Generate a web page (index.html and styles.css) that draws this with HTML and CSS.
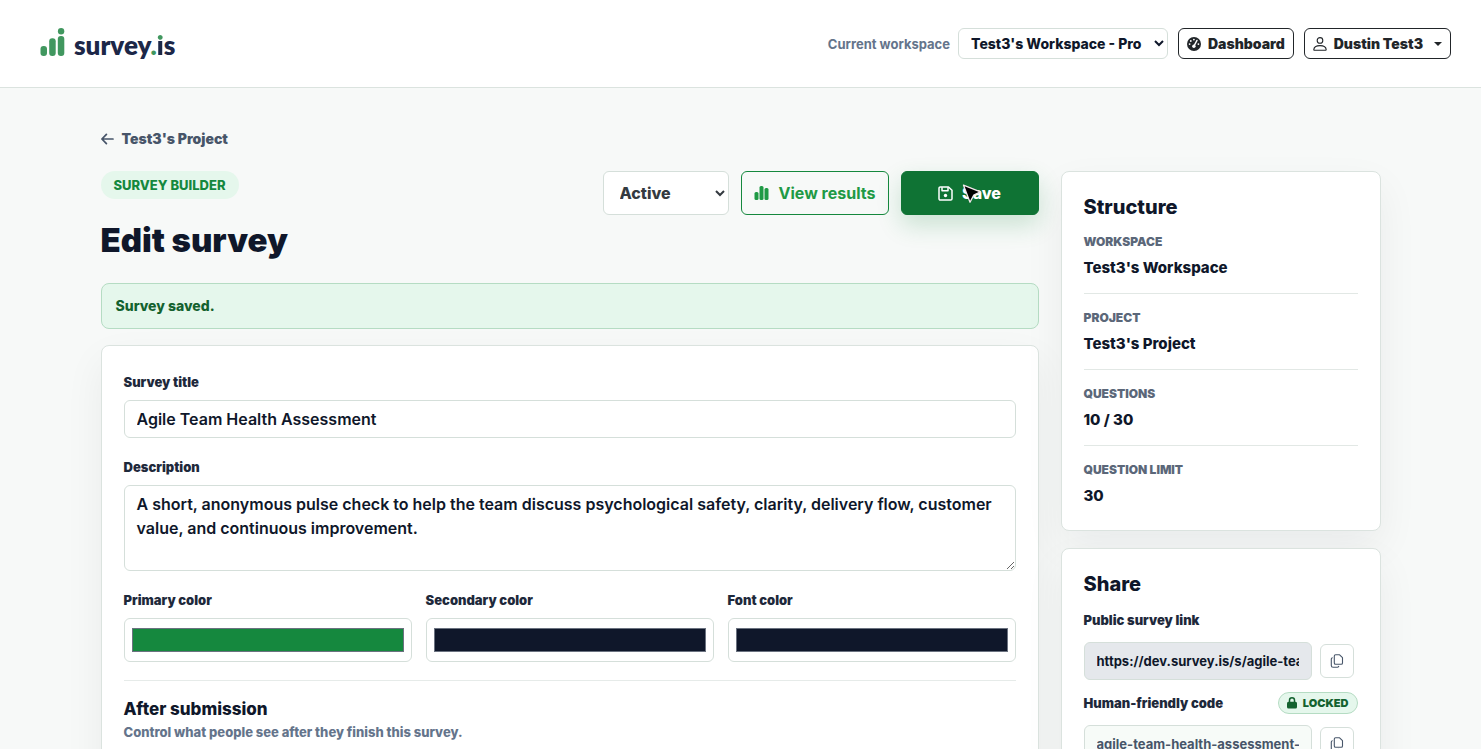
FILE: index.html
```html
<!DOCTYPE html>
<html lang="en">
<head>
  <meta charset="utf-8">
  <meta name="viewport" content="width=device-width, initial-scale=1">
  <title>Edit survey - survey.is</title>
  <link rel="stylesheet" href="styles.css">
</head>
<body>
  <header class="topbar">
    <a class="brand" href="#" aria-label="survey.is">
      <svg class="brand-mark" width="26" height="32" viewBox="0 0 26 32" fill="#41975f">
        <rect x="0.5" y="18" width="6.5" height="10" rx="3"/>
        <rect x="9.2" y="10.2" width="6.5" height="17.8" rx="3"/>
        <rect x="17.8" y="8" width="6.5" height="20" rx="3"/>
        <circle cx="21.1" cy="3.2" r="3.2"/>
      </svg>
      <span class="brand-name">survey<span class="brand-dot">.</span><span class="brand-i">i</span>s</span>
    </a>

    <div class="topbar-nav">
      <label class="workspace-label" for="workspace">Current workspace</label>
      <select class="workspace-select" id="workspace">
        <option>Test3's Workspace - Pro</option>
      </select>
      <a class="btn-dark" href="#">
        <svg width="14" height="14" viewBox="0 0 14 14">
          <circle cx="7" cy="7" r="7" fill="#212529"/>
          <path d="M7.2 8.6 10 3.4" stroke="#fff" stroke-width="1.4" stroke-linecap="round"/>
          <circle cx="6.9" cy="9.2" r="1.7" fill="#fff"/>
          <circle cx="6.9" cy="2.6" r="0.9" fill="#fff"/>
          <circle cx="3.8" cy="4" r="0.9" fill="#fff"/>
          <circle cx="2.6" cy="7.1" r="0.9" fill="#fff"/>
          <circle cx="11.4" cy="7.1" r="0.9" fill="#fff"/>
        </svg>
        Dashboard
      </a>
      <button class="btn-dark btn-user" type="button">
        <svg width="14" height="14" viewBox="0 0 14 14" fill="none" stroke="#212529" stroke-width="1.1">
          <circle cx="7" cy="3.4" r="2.8"/>
          <path d="M1.4 13.3c-.4 0-.6-.3-.6-.7C1 10 3.4 8.6 7 8.6s6 1.4 6.2 4c0 .4-.2.7-.6.7z"/>
        </svg>
        Dustin Test3
        <span class="caret"></span>
      </button>
    </div>
  </header>

  <main class="page">
    <div class="container">
      <a class="back-link" href="#">
        <svg width="13" height="12" viewBox="0 0 13 12" fill="none" stroke="currentColor" stroke-width="1.7" stroke-linecap="round" stroke-linejoin="round">
          <path d="M12 6H1M5.4 1.4.9 6l4.5 4.6"/>
        </svg>
        Test3's Project
      </a>

      <div class="layout">
        <form class="builder">
          <div class="builder-head">
            <div>
              <span class="eyebrow">SURVEY BUILDER</span>
              <h1>Edit survey</h1>
            </div>
            <div class="actions">
              <select class="status-select" aria-label="Status">
                <option>Active</option>
                <option>Draft</option>
              </select>
              <a class="btn btn-outline" href="#">
                <svg width="16" height="16" viewBox="0 0 16 16" fill="currentColor">
                  <rect x="0.5" y="7" width="4" height="8" rx="1.5"/>
                  <rect x="5.5" y="1" width="4" height="14" rx="1.5"/>
                  <rect x="10.5" y="3" width="4" height="12" rx="1.5"/>
                </svg>
                View results
              </a>
              <button class="btn btn-save" type="button">
                <svg width="15" height="15" viewBox="0 0 15 15" fill="none" stroke="currentColor" stroke-width="1.5" stroke-linejoin="round">
                  <path d="M2.3 1h8.2L14 4.3v8.4c0 .7-.6 1.3-1.3 1.3H2.3C1.6 14 1 13.4 1 12.7V2.3C1 1.6 1.6 1 2.3 1z"/>
                  <path d="M4 1.2v3.6h6V1.2"/>
                  <circle cx="7.5" cy="9.5" r="1.7" fill="currentColor" stroke="none"/>
                </svg>
                Save
                <svg class="pointer" width="20" height="22" viewBox="0 0 20 22">
                  <path d="M1.500 2.200 18.400 8.800 11.800 12.100 8 19.200z" fill="#000" stroke="#f3e9ec" stroke-width="1.3" stroke-linejoin="round"/>
                </svg>
              </button>
            </div>
          </div>

          <div class="alert" role="status">Survey saved.</div>

          <section class="card card-form">
            <div class="field">
              <label for="title">Survey title</label>
              <input class="control" id="title" type="text" value="Agile Team Health Assessment">
            </div>
            <div class="field">
              <label for="description">Description</label>
              <textarea class="control control-area" id="description" spellcheck="false">A short, anonymous pulse check to help the team discuss psychological safety, clarity, delivery flow, customer value, and continuous improvement.</textarea>
            </div>
            <div class="colors">
              <div class="field">
                <label for="primary">Primary color</label>
                <input class="color" id="primary" type="color" value="#15883e">
              </div>
              <div class="field">
                <label for="secondary">Secondary color</label>
                <input class="color" id="secondary" type="color" value="#0f172a">
              </div>
              <div class="field">
                <label for="font">Font color</label>
                <input class="color" id="font" type="color" value="#0f172a">
              </div>
            </div>
            <div class="after">
              <h2>After submission</h2>
              <p>Control what people see after they finish this survey.</p>
            </div>
          </section>
        </form>

        <aside class="sidebar">
          <section class="card">
            <h2 class="card-title">Structure</h2>
            <dl class="facts">
              <div class="fact">
                <dt>WORKSPACE</dt>
                <dd>Test3's Workspace</dd>
              </div>
              <div class="fact">
                <dt>PROJECT</dt>
                <dd>Test3's Project</dd>
              </div>
              <div class="fact">
                <dt>QUESTIONS</dt>
                <dd>10 / 30</dd>
              </div>
              <div class="fact">
                <dt>QUESTION LIMIT</dt>
                <dd>30</dd>
              </div>
            </dl>
          </section>

          <section class="card">
            <h2 class="card-title">Share</h2>
            <div class="share-label">
              <label for="link">Public survey link</label>
            </div>
            <div class="share-row">
              <input class="control control-share control-muted" id="link" type="text" readonly value="https://dev.survey.is/s/agile-team-health-assessment">
              <button class="copy" type="button" aria-label="Copy link">
                <svg width="14" height="14" viewBox="0 0 14 14" fill="none" stroke="currentColor" stroke-width="1.1" stroke-linejoin="round" stroke-linecap="round">
                  <path d="M5.6.8h4l2.900 2.900v5.200c0 .8-.5 1.300-1.300 1.300H5.600c-.8 0-1.300-.5-1.300-1.300V2.100c0-.8.5-1.300 1.300-1.300z"/>
                  <path d="M2.300 3.800c-.6.2-1 .7-1 1.300v6.300c0 1 .8 1.800 1.800 1.800h4.300c.6 0 1-.3 1.300-.8"/>
                </svg>
              </button>
            </div>
            <div class="share-label share-label-code">
              <label for="code">Human-friendly code</label>
              <span class="locked">
                <svg width="10" height="12" viewBox="0 0 10 12">
                  <path d="M2.5 5.5V3.3a2.5 2.5 0 0 1 5 0v2.2" fill="none" stroke="currentColor" stroke-width="1.5"/>
                  <rect x="0" y="4.8" width="10" height="6.7" rx="1.5" fill="currentColor"/>
                </svg>
                LOCKED
              </span>
            </div>
            <div class="share-row">
              <input class="control control-share control-locked" id="code" type="text" readonly value="agile-team-health-assessment-2">
              <button class="copy" type="button" aria-label="Copy code">
                <svg width="14" height="14" viewBox="0 0 14 14" fill="none" stroke="currentColor" stroke-width="1.1" stroke-linejoin="round" stroke-linecap="round">
                  <path d="M5.6.8h4l2.900 2.900v5.200c0 .8-.5 1.300-1.300 1.300H5.600c-.8 0-1.300-.5-1.300-1.300V2.100c0-.8.5-1.300 1.300-1.300z"/>
                  <path d="M2.300 3.800c-.6.2-1 .7-1 1.300v6.300c0 1 .8 1.800 1.800 1.800h4.300c.6 0 1-.3 1.300-.8"/>
                </svg>
              </button>
            </div>
          </section>
        </aside>
      </div>
    </div>
  </main>
</body>
</html>
```
FILE: styles.css
```css
* {
  box-sizing: border-box;
}

body {
  margin: 0;
  height: 100vh;
  display: flex;
  flex-direction: column;
  font-family: Inter, sans-serif;
  color: #0f172a;
  background: #f7f9f8;
}

h1, h2, p, dl, dd {
  margin: 0;
}

a {
  text-decoration: none;
}

input, select, textarea, button {
  font-family: inherit;
  margin: 0;
}

svg {
  flex: none;
}

/* Top bar */
.topbar {
  flex: none;
  display: flex;
  align-items: center;
  justify-content: space-between;
  height: 88px;
  padding: 0 30px 0 40px;
  background: #fff;
  border-bottom: 1px solid #dbe3df;
}

.brand {
  display: flex;
  align-items: center;
  gap: 8px;
  color: #1c2748;
}

.brand-name {
  padding-top: 2px;
  font-family: Lato, sans-serif;
  font-size: 26px;
  font-weight: 800;
  line-height: 30px;
}

.brand-dot {
  color: #41975f;
}

/* green dot over a navy stem */
.brand-i {
  color: transparent;
  background: linear-gradient(#41975f 38%, #1c2748 38%);
  -webkit-background-clip: text;
  background-clip: text;
}

.topbar-nav {
  display: flex;
  align-items: center;
  gap: 10px;
}

.workspace-label {
  margin-right: -2px;
  font-size: 13px;
  font-weight: 700;
  line-height: 20px;
  color: #64748b;
}

.workspace-select {
  width: 210px;
  height: 31px;
  padding: 0 0 0 8px;
  border: 1px solid #d5dfda;
  border-radius: 6px;
  background: #fff;
  color: #0f172a;
  font-size: 14px;
  font-weight: 800;
}

.btn-dark {
  display: flex;
  align-items: center;
  gap: 7px;
  height: 31px;
  padding: 0 8px;
  border: 1px solid #212529;
  border-radius: 6px;
  background: #fff;
  color: #212529;
  font-size: 14px;
  font-weight: 900;
}

.caret {
  margin-left: 4px;
  border-top: 4px solid #212529;
  border-left: 4px solid transparent;
  border-right: 4px solid transparent;
}

/* Page */
.page {
  flex: 1;
  min-height: 0;
  overflow-y: auto;
  scrollbar-width: none;
  padding: 40px 24px;
}

.container {
  max-width: 1280px;
  margin: 0 auto;
}

.back-link {
  display: flex;
  align-items: center;
  gap: 8px;
  width: fit-content;
  margin-bottom: 21px;
  color: #475569;
  font-size: 14px;
  font-weight: 900;
  line-height: 22px;
}

.layout {
  display: grid;
  grid-template-columns: minmax(0, 1fr) 320px;
  gap: 22px;
  align-items: start;
}

.builder-head {
  display: flex;
  justify-content: space-between;
  align-items: flex-start;
  margin-bottom: 23px;
}

.eyebrow {
  display: block;
  width: fit-content;
  padding: 0 13px;
  border-radius: 14px;
  background: #e5f7ec;
  color: #15883e;
  font-size: 13px;
  font-weight: 800;
  line-height: 28px;
}

h1 {
  margin-top: 21px;
  font-size: 33px;
  font-weight: 900;
  line-height: 40px;
}

.actions {
  display: flex;
  gap: 12px;
}

.status-select {
  width: 126px;
  height: 44px;
  padding: 0 0 0 12px;
  border: 1px solid #d5dfda;
  border-radius: 6px;
  background: #fff;
  color: #343a40;
  font-size: 16px;
  font-weight: 800;
}

.btn {
  display: flex;
  align-items: center;
  justify-content: center;
  gap: 9px;
  height: 44px;
  padding: 0 11px;
  border: 1px solid #15883e;
  border-radius: 6px;
  font-size: 16px;
  font-weight: 700;
}

.btn-outline {
  min-width: 148px;
  color: #1f9a45;
}

.btn-save {
  position: relative;
  min-width: 138px;
  border-color: #0f7334;
  background: #0f7334;
  color: #fff;
  font-weight: 800;
  box-shadow: 0 10px 24px rgba(21, 136, 62, 0.2);
}

.pointer {
  position: absolute;
  top: 11px;
  left: 60px;
}

.alert {
  margin-bottom: 16px;
  padding: 12px 14px;
  border: 1px solid #b5dcc3;
  border-radius: 8px;
  background: #e5f7ec;
  color: #14622f;
  font-size: 14px;
  font-weight: 800;
  line-height: 20px;
}

/* Cards */
.card {
  padding: 22px;
  border: 1px solid #dbe3df;
  border-radius: 8px;
  background: #fff;
  box-shadow: 0 16px 40px rgba(15, 23, 42, 0.06);
}

.card-form {
  padding-top: 26px;
}

.card label {
  font-size: 13px;
  font-weight: 900;
  line-height: 20px;
  color: #1e293b;
}

.field {
  display: flex;
  flex-direction: column;
  gap: 8px;
  margin-bottom: 19px;
}

.control {
  width: 100%;
  height: 38px;
  padding: 6px 12px;
  border: 1px solid #d5dfda;
  border-radius: 6px;
  background: #fff;
  color: #0f172a;
  font-size: 16px;
  font-weight: 600;
  line-height: 24px;
}

.control-area {
  height: 86px;
  resize: vertical;
}

.colors {
  display: grid;
  grid-template-columns: repeat(3, 1fr);
  gap: 14px;
}

.colors .field {
  margin-bottom: 18px;
}

.color {
  width: 100%;
  height: 44px;
  padding: 9px 7px;
  border: 1px solid #d5dfda;
  border-radius: 6px;
  background: #fff;
}

.color::-webkit-color-swatch-wrapper {
  padding: 0;
}

.color::-webkit-color-swatch {
  border: 1px solid #6b7280;
}

.after {
  padding-top: 16px;
  padding-bottom: 40px;
  border-top: 1px solid #e6ebe9;
}

.after h2 {
  font-size: 17px;
  font-weight: 800;
  line-height: 24px;
}

.after p {
  color: #64748b;
  font-size: 13px;
  font-weight: 800;
  line-height: 22px;
}

/* Sidebar */
.sidebar {
  display: grid;
  gap: 17px;
}

.card-title {
  margin-bottom: 12px;
  font-size: 20px;
  font-weight: 800;
  line-height: 26px;
}

.fact {
  padding: 14px 0 13px;
  border-bottom: 1px solid #e2e8e5;
}

.fact:first-child {
  padding-top: 0;
}

.fact:last-child {
  padding-bottom: 0;
  border-bottom: 0;
}

.fact dt {
  margin-bottom: 4px;
  color: #5b6779;
  font-size: 12px;
  font-weight: 900;
  line-height: 20px;
}

.fact dd {
  font-size: 15px;
  font-weight: 800;
  line-height: 24px;
}

.share-label {
  display: flex;
  align-items: center;
  justify-content: space-between;
  height: 22px;
  margin-bottom: 11px;
}

.share-label-code {
  margin-top: 12px;
}

.share-row {
  display: grid;
  grid-template-columns: 1fr 38px;
  gap: 8px;
  align-items: center;
}

.control-share {
  font-size: 13px;
  font-weight: 700;
}

.control-muted {
  background: #e5e8ec;
}

.control-locked {
  background: #f7fbf8;
  color: #475569;
}

.copy {
  display: flex;
  align-items: center;
  justify-content: center;
  width: 34px;
  height: 34px;
  padding: 0;
  border: 1px solid #d5dfda;
  border-radius: 6px;
  background: #fff;
  color: #475569;
}

.locked {
  display: flex;
  align-items: center;
  gap: 6px;
  height: 22px;
  padding: 0 8px;
  border: 1px solid #b5dcc3;
  border-radius: 11px;
  background: #e5f7ec;
  color: #14622f;
  font-size: 11px;
  font-weight: 900;
}
```
